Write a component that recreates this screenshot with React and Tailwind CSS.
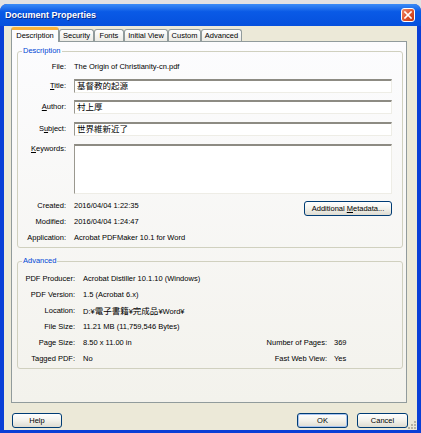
import React from "react";

const tabs = [
  { label: "Description", width: "w-[48px]", active: true },
  { label: "Security", width: "w-[35px]" },
  { label: "Fonts", width: "w-[30px]" },
  { label: "Initial View", width: "w-[44px]" },
  { label: "Custom", width: "w-[33px]" },
  { label: "Advanced", width: "w-[41px]" },
];

const Cjk = ({ children }) => <span className="text-[8.5px]">{children}</span>;

const TextBox = ({ children, className = "h-[14px]" }) => (
  <div
    className={`${className} flex items-start bg-white pl-[2px] border-t-2 border-l border-b border-r border-t-[#8d8b83] border-l-[#9a988f] border-b-[#eeede6] border-r-[#eeede6]`}
  >
    {children}
  </div>
);

const XpButton = ({ children, className = "" }) => (
  <button
    className={`h-[15px] rounded-[3px] border border-[#003c74] bg-linear-to-b from-white via-[#f3f2ec] to-[#dedcd2] text-black leading-none ${className}`}
  >
    {children}
  </button>
);

const DescRow = ({ label, children, className = "" }) => (
  <div className={`flex items-center ${className}`}>
    <span className="w-[48px] shrink-0 text-right">{label}</span>
    <div className="ml-[8px] flex-1">{children}</div>
  </div>
);

const AdvRow = ({ label, value, rightLabel, rightValue }) => (
  <div className="flex h-[16px] items-center">
    <span className="w-[57px] shrink-0 text-right">{label}</span>
    <span className="ml-[8px] flex-1">{value}</span>
    {rightLabel && (
      <>
        <span className="w-[80px] text-right">{rightLabel}</span>
        <span className="w-[75px] pl-[7px]">{rightValue}</span>
      </>
    )}
  </div>
);

const Accel = ({ children }) => <span className="underline underline-offset-[1px]">{children}</span>;

export default function App() {
  return (
    <div className="h-[433px] w-[421px] overflow-hidden bg-[#e2e2e2] pt-[4px] font-['Liberation_Sans','Noto_Sans_CJK_JP',sans-serif] text-[7.5px] leading-[10px] text-black">
      <div className="flex h-[429px] flex-col rounded-t-[7px] bg-[#0a3fd6]">
        {/* title bar */}
        <div className="flex h-[22px] shrink-0 items-center rounded-t-[7px] bg-linear-to-b from-[#3b8cf6] via-[#0a5ae6] via-35% to-[#0650dd] pl-[5px] pr-[6px]">
          <span className="text-[9px] font-bold text-white [text-shadow:1px_1px_0_#0a2a8a]">
            Document Properties
          </span>
          <div className="ml-auto flex h-[14px] w-[14px] items-center justify-center rounded-[3px] border border-white bg-linear-to-br from-[#ef8a68] via-[#df5630] to-[#c0350f]">
            <svg width="8" height="8" viewBox="0 0 8 8">
              <path d="M1 1L7 7M7 1L1 7" stroke="white" strokeWidth="1.6" strokeLinecap="square" />
            </svg>
          </div>
        </div>

        {/* body */}
        <div className="relative mx-[4px] mb-[3px] flex flex-1 flex-col bg-[#ece9d8]">
          {/* tabs */}
          <div className="ml-[7px] mt-[1px] flex h-[14px] items-end">
            {tabs.map((t) =>
              t.active ? (
                <div
                  key={t.label}
                  className={`${t.width} relative z-10 -mb-[1px] flex h-[15px] items-center justify-center rounded-t-[3px] border-x border-t-[3px] border-x-[#919b9c] border-t-[#f7b23b] bg-[#fcfcfe]`}
                >
                  {t.label}
                </div>
              ) : (
                <div
                  key={t.label}
                  className={`${t.width} flex h-[12px] items-center justify-center rounded-t-[3px] border-x border-t border-[#919b9c] bg-linear-to-b from-white to-[#ecebe5]`}
                >
                  {t.label}
                </div>
              )
            )}
          </div>

          {/* panel */}
          <div className="ml-[7px] flex h-[362px] w-[396px] flex-col border border-[#919b9c] bg-linear-to-b from-[#fcfcfe] to-[#f3f2ec] pl-[5px] pr-[3px]">
            <fieldset className="mt-[4px] rounded-[3px] border border-[#d0d0bf] pb-[1px] pr-[10px]">
              <legend className="ml-[4px] px-[1px] leading-[10px] text-[#0046d5]">Description</legend>
              <DescRow label="File:" className="mt-[4px] h-[14px]">
                The Origin of Christianity-cn.pdf
              </DescRow>
              <DescRow label={<><Accel>T</Accel>itle:</>} className="mt-[5px]">
                <TextBox>
                  <Cjk>基督教的起源</Cjk>
                </TextBox>
              </DescRow>
              <DescRow label={<><Accel>A</Accel>uthor:</>} className="mt-[7px]">
                <TextBox>
                  <Cjk>村上厚</Cjk>
                </TextBox>
              </DescRow>
              <DescRow label={<>S<Accel>u</Accel>bject:</>} className="mt-[8px]">
                <TextBox>
                  <Cjk>世界維新近了</Cjk>
                </TextBox>
              </DescRow>
              <div className="mt-[8px] flex items-start">
                <span className="w-[48px] shrink-0 text-right">
                  <Accel>K</Accel>eywords:
                </span>
                <div className="ml-[8px] flex-1">
                  <TextBox className="h-[50px]" />
                </div>
              </div>
              <div className="mt-[4px] flex items-start">
                <div className="flex flex-col">
                  <DescRow label="Created:" className="h-[16px]">
                    2016/04/04 1:22:35
                  </DescRow>
                  <DescRow label="Modified:" className="h-[16px]">
                    2016/04/04 1:24:47
                  </DescRow>
                  <DescRow label="Application:" className="h-[16px]">
                    <span className="whitespace-nowrap">Acrobat PDFMaker 10.1 for Word</span>
                  </DescRow>
                </div>
                <XpButton className="ml-auto mt-[3px] w-[88px]">
                  Additional <Accel>M</Accel>etadata...
                </XpButton>
              </div>
            </fieldset>

            <fieldset className="mt-[8px] rounded-[3px] border border-[#d0d0bf] pb-[1px]">
              <legend className="ml-[4px] px-[1px] leading-[10px] text-[#0046d5]">Advanced</legend>
              <div className="mt-[5px] flex flex-col">
                <AdvRow label="PDF Producer:" value="Acrobat Distiller 10.1.10 (Windows)" />
                <AdvRow label="PDF Version:" value="1.5 (Acrobat 6.x)" />
                <AdvRow
                  label="Location:"
                  value={
                    <>
                      D:¥<Cjk>電子書籍</Cjk>¥<Cjk>完成品</Cjk>¥Word¥
                    </>
                  }
                />
                <AdvRow label="File Size:" value="11.21 MB (11,759,546 Bytes)" />
                <AdvRow
                  label="Page Size:"
                  value="8.50 x 11.00 in"
                  rightLabel="Number of Pages:"
                  rightValue="369"
                />
                <AdvRow label="Tagged PDF:" value="No" rightLabel="Fast Web View:" rightValue="Yes" />
              </div>
            </fieldset>
          </div>

          {/* buttons */}
          <div className="mt-[10px] flex items-center">
            <XpButton className="ml-[8px] w-[50px]">Help</XpButton>
            <div className="ml-auto mr-[9px] flex gap-[9px]">
              <XpButton className="w-[51px] shadow-[inset_0_0_0_1px_#a9c4f0]">OK</XpButton>
              <XpButton className="w-[51px]">Cancel</XpButton>
            </div>
          </div>

          <svg className="absolute bottom-[1px] right-[1px]" width="8" height="8" viewBox="0 0 8 8">
            <g fill="#b6b3a4">
              <rect x="6" y="0" width="2" height="2" />
              <rect x="3" y="3" width="2" height="2" />
              <rect x="6" y="3" width="2" height="2" />
              <rect x="0" y="6" width="2" height="2" />
              <rect x="3" y="6" width="2" height="2" />
              <rect x="6" y="6" width="2" height="2" />
            </g>
          </svg>
        </div>
      </div>
    </div>
  );
}
